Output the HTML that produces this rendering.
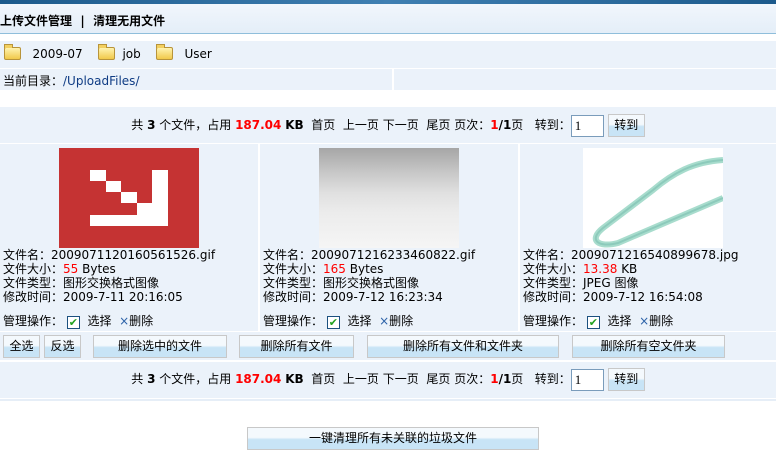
<!DOCTYPE html>
<html><head><meta charset="utf-8"><style>
*{margin:0;padding:0;box-sizing:border-box}
body{width:776px;height:450px;background:#fff;font-family:"DejaVu Sans","Noto Sans CJK SC","WenQuanYi Zen Hei",sans-serif;font-size:12px;color:#000;position:relative;overflow:hidden}
.a{position:absolute;white-space:nowrap}
.bg{background:#ebf2fa}
.btn{position:absolute;border:1px solid #c8c8c8;background:linear-gradient(#f4f9fd 0,#f4f9fd 45%,#c8e4f6 55%,#c8e4f6 100%);text-align:center;font-size:12px;line-height:20px}
.ib{display:inline-block;border:1px solid #c8c8c8;background:linear-gradient(#f4f9fd 0,#f4f9fd 45%,#c8e4f6 55%,#c8e4f6 100%);text-align:center;width:37px;height:23px;line-height:20px;vertical-align:middle}
.inp{display:inline-block;width:33px;height:22px;border:1px solid #7a9cbb;background:#fff;font-family:'Liberation Serif',serif;font-size:13px;padding-left:3px;line-height:20px;text-align:left;vertical-align:middle;margin-right:4px}
.red{color:#f00}
.fold{display:inline-block;width:17px;height:13px;background:linear-gradient(#fff3b0,#f1c94a);border:1px solid #b8943a;border-radius:2px;vertical-align:-2px;position:relative}
.fold:before{content:"";position:absolute;left:-1px;top:-4px;width:7px;height:3px;background:#f3d060;border:1px solid #b8943a;border-bottom:none}
.chk{display:inline-block;width:13px;height:13px;border:1px solid #1c5180;background:#fff;color:#21a121;font-size:11px;line-height:11px;text-align:center;vertical-align:-1px}
.x{color:#2c62a8}
.pg{position:absolute;left:0;width:776px;text-align:center;white-space:nowrap}
</style></head><body>
<div class="a" style="left:0;top:0;width:776px;height:4px;background:linear-gradient(90deg,#1c5a8c,#3f7fb2,#1c5a8c)"></div>
<div class="a" style="left:0;top:4px;width:776px;height:30px;background:linear-gradient(#f1f6fc,#e4eef8);border-bottom:1px solid #8fbedb"></div>
<div class="a" style="left:0;top:12px;font-weight:bold;font-size:12px">上传文件管理 &nbsp;| &nbsp;清理无用文件</div>

<div class="a bg" style="left:0;top:41px;width:776px;height:27px"></div>
<div class="a" style="left:4px;top:47px;font-size:12px"><span class="fold"></span>&nbsp;&nbsp; 2009-07 &nbsp;&nbsp; <span class="fold"></span>&nbsp; job &nbsp;&nbsp; <span class="fold"></span>&nbsp;&nbsp; User</div>
<div class="a bg" style="left:0;top:69px;width:392px;height:21px"></div>
<div class="a bg" style="left:394px;top:69px;width:382px;height:21px"></div>
<div class="a" style="left:3px;top:72px;font-size:12px">当前目录：<span style="color:#0f3c84">/UploadFiles/</span></div>

<div class="a bg" style="left:0;top:107px;width:776px;height:36px"></div>
<div class="pg" style="top:114px">共 <b>3</b> 个文件，占用 <b class="red">187.04</b> <b>KB</b> &nbsp;首页 &nbsp;上一页 下一页 &nbsp;尾页 页次：<b class="red">1</b><b>/1</b>页 &nbsp; 转到：<span class="inp">1</span><span class="ib">转到</span></div>

<div class="a bg" style="left:0;top:144px;width:258px;height:187px"></div>
<div class="a bg" style="left:260px;top:144px;width:258px;height:187px"></div>
<div class="a bg" style="left:520px;top:144px;width:256px;height:187px"></div>

<svg class="a" style="left:59px;top:148px" width="140" height="100"><rect width="140" height="100" fill="#c53333"/><g fill="#fff"><rect x="31" y="22" width="16" height="11"/><rect x="47" y="33" width="15" height="11"/><rect x="62" y="44" width="16" height="11"/><rect x="93" y="22" width="16" height="56"/><rect x="78" y="55" width="15" height="23"/><rect x="31" y="67" width="62" height="11"/></g></svg>
<div class="a" style="left:319px;top:148px;width:140px;height:100px;background:linear-gradient(#a6a6a6,#c8c8c8 25%,#e0e0e0 45%,#ececec 65%,#f5f5f5)"></div>
<svg class="a" style="left:583px;top:148px" width="140" height="100"><rect width="140" height="100" fill="#fff"/><path d="M140 12 C110 14 90 25 70 42 L20 80 C5 92 15 100 35 95 L140 50" fill="none" stroke="#a8dccd" stroke-width="6"/><path d="M140 12 C110 14 90 25 70 42 L20 80 C5 92 15 100 35 95 L140 50" fill="none" stroke="#8ccabb" stroke-width="2"/></svg>

<div class="a" style="left:3px;top:248px;line-height:14px">文件名：2009071120160561526.gif<br>文件大小：<span class="red">55</span> Bytes<br>文件类型：图形交换格式图像<br>修改时间：2009-7-11 20:16:05</div>
<div class="a" style="left:263px;top:248px;line-height:14px">文件名：2009071216233460822.gif<br>文件大小：<span class="red">165</span> Bytes<br>文件类型：图形交换格式图像<br>修改时间：2009-7-12 16:23:34</div>
<div class="a" style="left:523px;top:248px;line-height:14px">文件名：2009071216540899678.jpg<br>文件大小：<span class="red">13.38</span> KB<br>文件类型：JPEG 图像<br>修改时间：2009-7-12 16:54:08</div>
<div class="a" style="left:3px;top:312px">管理操作： <span class="chk">✔</span> &nbsp;选择 &nbsp;<span class="x">×</span>删除</div>
<div class="a" style="left:263px;top:312px">管理操作： <span class="chk">✔</span> &nbsp;选择 &nbsp;<span class="x">×</span>删除</div>
<div class="a" style="left:523px;top:312px">管理操作： <span class="chk">✔</span> &nbsp;选择 &nbsp;<span class="x">×</span>删除</div>

<div class="a bg" style="left:0;top:332px;width:776px;height:28px"></div>
<div class="btn" style="left:3px;top:335px;width:37px;height:23px">全选</div>
<div class="btn" style="left:44px;top:335px;width:37px;height:23px">反选</div>
<div class="btn" style="left:93px;top:335px;width:134px;height:23px">删除选中的文件</div>
<div class="btn" style="left:239px;top:335px;width:115px;height:23px">删除所有文件</div>
<div class="btn" style="left:367px;top:335px;width:192px;height:23px">删除所有文件和文件夹</div>
<div class="btn" style="left:572px;top:335px;width:153px;height:23px">删除所有空文件夹</div>

<div class="a bg" style="left:0;top:362px;width:776px;height:36px"></div>
<div class="pg" style="top:368px">共 <b>3</b> 个文件，占用 <b class="red">187.04</b> <b>KB</b> &nbsp;首页 &nbsp;上一页 下一页 &nbsp;尾页 页次：<b class="red">1</b><b>/1</b>页 &nbsp; 转到：<span class="inp">1</span><span class="ib">转到</span></div>
<div class="a" style="left:0;top:399px;width:776px;height:2px;background:#e6eef7"></div>

<div class="btn" style="left:247px;top:427px;width:292px;height:23px">一键清理所有未关联的垃圾文件</div>
</body></html>
